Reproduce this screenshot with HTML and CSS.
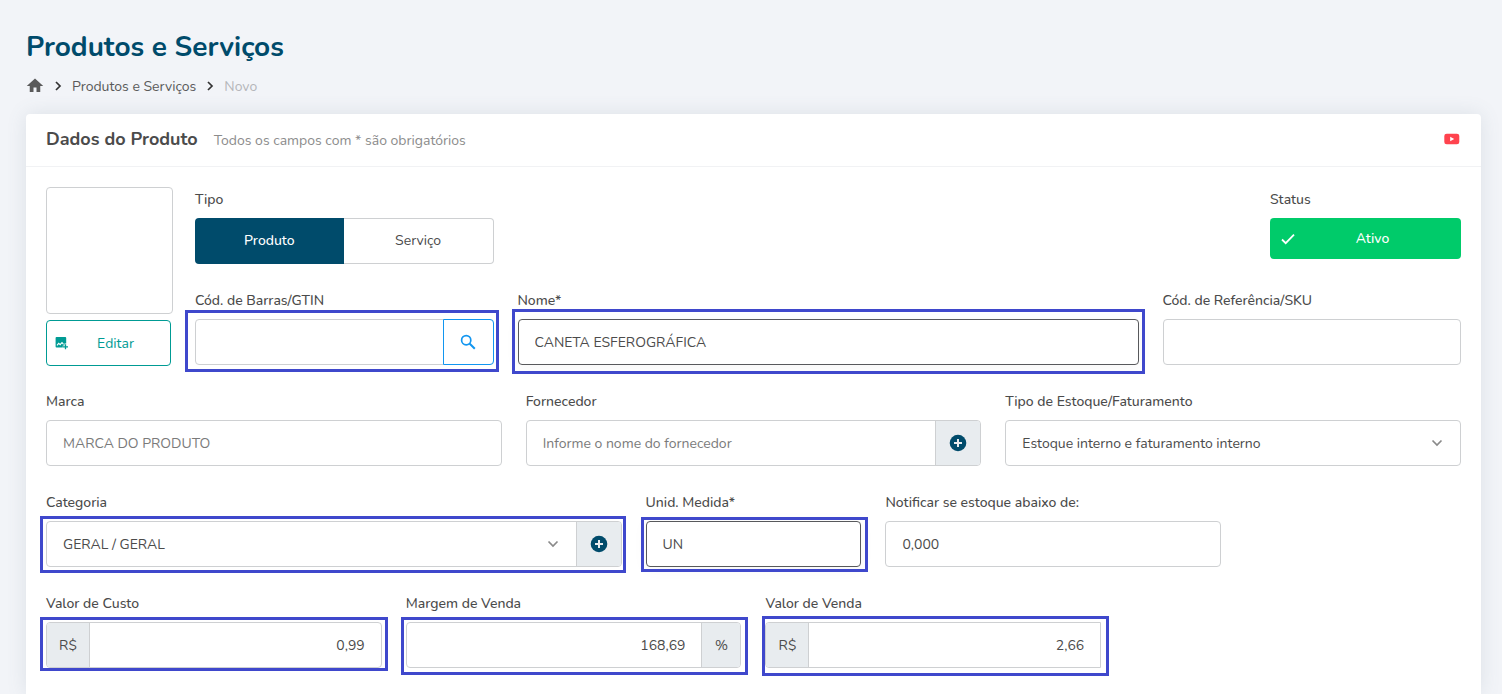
FILE: index.html
```html
<!DOCTYPE html>
<html lang="pt-BR">
<head>
<meta charset="utf-8">
<meta name="viewport" content="width=device-width, initial-scale=1">
<title>Produtos e Serviços</title>
<link rel="stylesheet" href="styles.css">
</head>
<body>
<main class="page">
  <h1 class="page-title">Produtos e Serviços</h1>
  <nav class="breadcrumb" aria-label="Navegação">
    <a class="crumb-home" href="#" aria-label="Início">
      <svg width="18" height="18" viewBox="0 0 24 24"><path fill="currentColor" d="M10 20v-6h4v6h5v-8h4L12 2 1 12h4v8z"/></svg>
    </a>
    <svg class="crumb-sep" width="8" height="10" viewBox="0 0 8 10"><path d="M2 1l4 4-4 4" fill="none" stroke="currentColor" stroke-width="1.7"/></svg>
    <a class="crumb" href="#">Produtos e Serviços</a>
    <svg class="crumb-sep" width="8" height="10" viewBox="0 0 8 10"><path d="M2 1l4 4-4 4" fill="none" stroke="currentColor" stroke-width="1.7"/></svg>
    <span class="crumb crumb-current">Novo</span>
  </nav>

  <section class="card">
    <header class="card-header">
      <h2 class="card-title">Dados do Produto</h2>
      <span class="card-note">Todos os campos com * são obrigatórios</span>
      <a class="video-link" href="#" aria-label="Vídeo">
        <svg width="18" height="12" viewBox="0 0 18 12"><rect x="1.3" y="0.7" width="15" height="10.600" rx="2.400" fill="#ff434e"/><path d="M7.200 3.800v4.400L11.200 6z" fill="#fff"/></svg>
      </a>
    </header>

    <form class="card-body">
      <div class="top">
        <div class="photo">
          <div class="photo-frame"></div>
          <button class="edit-button" type="button">
            <svg width="14" height="14" viewBox="0 0 14 14"><path fill="currentColor" d="M1.500 1h8.800q.9 0 .9.900V7.500H9.400V9.400H7.800v2H1.500q-.9 0-.9-.9V1.900q0-.9.9-.9z"/><path d="M2 9.300l1.700-2 1.500 1.300 1.800-2.100 1.500 1.800" fill="none" stroke="#fff" stroke-width="1.100"/><path d="M10.500 8.300v5M8 10.800h5" stroke="currentColor" stroke-width="1.300"/></svg>
            <span>Editar</span>
          </button>
        </div>

        <div class="grid">
          <div class="field span-3">
            <span class="label" id="tipo">Tipo</span>
            <div class="segmented" role="group" aria-labelledby="tipo">
              <button class="segment active" type="button">Produto</button>
              <button class="segment" type="button">Serviço</button>
            </div>
          </div>
          <div class="field span-2 at-end">
            <span class="label" id="status">Status</span>
            <button class="status-button" type="button" aria-describedby="status">
              <svg width="14" height="12" viewBox="0 0 14 12"><path d="M1 6.500l3.700 3.700L13 1.700" fill="none" stroke="currentColor" stroke-width="1.800"/></svg>
              <span>Ativo</span>
            </button>
          </div>

          <div class="field span-3 row-start">
            <label class="label" for="gtin">Cód. de Barras/GTIN</label>
            <div class="control mark mark-gtin">
              <input class="input" id="gtin" type="text">
              <button class="search-button" type="button" aria-label="Buscar">
                <svg width="16" height="16" viewBox="0 0 16 16" fill="none" stroke="currentColor"><circle cx="6.200" cy="6.200" r="4.600" stroke-width="1.700"/><path d="M9.500 9.500l5.300 5.300" stroke-width="2"/></svg>
              </button>
            </div>
          </div>
          <div class="field span-6">
            <label class="label" for="nome">Nome*</label>
            <div class="control focused mark mark-nome">
              <input class="input" id="nome" type="text" value="CANETA ESFEROGRÁFICA">
            </div>
          </div>
          <div class="field span-3">
            <label class="label" for="sku">Cód. de Referência/SKU</label>
            <div class="control"><input class="input" id="sku" type="text"></div>
          </div>
        </div>
      </div>

      <div class="grid">
        <div class="field span-4">
          <label class="label" for="marca">Marca</label>
          <div class="control"><input class="input" id="marca" type="text" placeholder="MARCA DO PRODUTO"></div>
        </div>
        <div class="field span-4">
          <label class="label" for="fornecedor">Fornecedor</label>
          <div class="control">
            <input class="input" id="fornecedor" type="text" placeholder="Informe o nome do fornecedor">
            <button class="addon add-button" type="button" aria-label="Adicionar fornecedor">
              <svg width="18" height="18" viewBox="0 0 18 18"><circle cx="9" cy="9" r="8.300" fill="#004b6b"/><path d="M9 5v8M5 9h8" stroke="#e9ecef" stroke-width="2"/></svg>
            </button>
          </div>
        </div>
        <div class="field span-4">
          <label class="label" for="estoque">Tipo de Estoque/Faturamento</label>
          <div class="control">
            <div class="select-box">
              <select class="input select" id="estoque"><option>Estoque interno e faturamento interno</option></select>
              <svg class="chevron" width="12" height="8" viewBox="0 0 12 8"><path d="M1.500 1.500L6 6l4.500-4.500" fill="none" stroke="currentColor" stroke-width="1.700"/></svg>
            </div>
          </div>
        </div>

        <div class="field span-5">
          <label class="label" for="categoria">Categoria</label>
          <div class="control mark mark-categoria">
            <div class="select-box">
              <select class="input select" id="categoria"><option>GERAL / GERAL</option></select>
              <svg class="chevron" width="12" height="8" viewBox="0 0 12 8"><path d="M1.500 1.500L6 6l4.500-4.500" fill="none" stroke="currentColor" stroke-width="1.700"/></svg>
            </div>
            <button class="addon add-button" type="button" aria-label="Adicionar categoria">
              <svg width="18" height="18" viewBox="0 0 18 18"><circle cx="9" cy="9" r="8.300" fill="#004b6b"/><path d="M9 5v8M5 9h8" stroke="#e9ecef" stroke-width="2"/></svg>
            </button>
          </div>
        </div>
        <div class="field span-2">
          <label class="label" for="unidade">Unid. Medida*</label>
          <div class="control focused mark mark-unidade"><input class="input" id="unidade" type="text" value="UN"></div>
        </div>
        <div class="field span-3">
          <label class="label" for="notificar">Notificar se estoque abaixo de:</label>
          <div class="control"><input class="input" id="notificar" type="text" value="0,000"></div>
        </div>

        <div class="field span-3 row-start">
          <label class="label" for="custo">Valor de Custo</label>
          <div class="control mark mark-custo">
            <span class="addon prefix">R$</span>
            <input class="input amount" id="custo" type="text" value="0,99">
          </div>
        </div>
        <div class="field span-3">
          <label class="label" for="margem">Margem de Venda</label>
          <div class="control mark mark-margem">
            <input class="input amount" id="margem" type="text" value="168,69">
            <span class="addon suffix">%</span>
          </div>
        </div>
        <div class="field span-3">
          <label class="label" for="venda">Valor de Venda</label>
          <div class="control square-end mark mark-venda">
            <span class="addon prefix">R$</span>
            <input class="input amount" id="venda" type="text" value="2,66">
          </div>
        </div>
      </div>
    </form>
  </section>
</main>
</body>
</html>
```
FILE: styles.css
```css
*,
*::before,
*::after {
  box-sizing: border-box;
}

body {
  margin: 0;
  background: #f2f4f8;
  color: #4b4b4b;
  font-family: Nunito, Lato, sans-serif;
  font-size: 14px;
  line-height: 24px;
}

button,
input,
select {
  margin: 0;
  font: inherit;
  color: inherit;
}

svg {
  display: block;
  flex: none;
}

a {
  color: inherit;
  text-decoration: none;
}

.page {
  display: flex;
  flex-direction: column;
  min-height: 100vh;
  padding: 28px 21px 0 26px;
}

.page-title {
  margin: 0;
  color: #004b6b;
  font-size: 28px;
  font-weight: 700;
  line-height: 38px;
}

.breadcrumb {
  display: flex;
  align-items: center;
  gap: 10px;
  height: 24px;
  margin: 8px 0 16px;
  color: #5a5a5a;
}

.crumb {
  padding-top: 2px;
}

.crumb-sep {
  color: #333;
}

.crumb-current {
  color: #b5b6ba;
}

.card {
  flex: 1;
  background: #fff;
  border-radius: 4px 4px 0 0;
  box-shadow: 0 0 20px rgba(90, 110, 130, 0.14);
}

.card-header {
  display: flex;
  align-items: center;
  gap: 16px;
  padding: 13px 20px 15px;
  border-bottom: 1px solid #f1f2f4;
}

.card-title {
  margin: 0;
  font-size: 18px;
  font-weight: 700;
  line-height: 24px;
}

.card-note {
  padding-top: 4px;
  color: #8c8c8c;
  line-height: 20px;
}

.video-link {
  margin-left: auto;
}

.card-body {
  display: flex;
  flex-direction: column;
  gap: 23px;
  padding: 20px;
}

.top {
  display: grid;
  grid-template-columns: 127px 1fr;
  gap: 22px;
}

.photo {
  display: flex;
  flex-direction: column;
  gap: 6px;
}

.photo-frame {
  height: 127px;
  border: 1px solid #ced0d2;
  border-radius: 4px;
}

.edit-button {
  display: flex;
  align-items: center;
  width: 125px;
  height: 46px;
  padding: 0 8px;
  border: 1px solid #009b94;
  border-radius: 4px;
  background: #fff;
  color: #009b94;
}

.edit-button span {
  flex: 1;
  padding-top: 2px;
}

.grid {
  display: grid;
  grid-template-columns: repeat(12, minmax(0, 1fr));
  gap: 24px;
  align-content: start;
}

.span-2 { grid-column: span 2; }
.span-3 { grid-column: span 3; }
.span-4 { grid-column: span 4; }
.span-5 { grid-column: span 5; }
.span-6 { grid-column: span 6; }
.at-end { grid-column: 11 / span 2; }
.row-start { grid-column: 1 / span 3; }

.field {
  display: flex;
  flex-direction: column;
  gap: 5px;
}

.label {
  font-weight: 500;
  line-height: 26px;
}

.segmented {
  display: flex;
  height: 46px;
}

.segment {
  flex: 1;
  border: 1px solid #ced0d2;
  border-left: 0;
  border-radius: 0 4px 4px 0;
  background: #fff;
}

.segment.active {
  border: 0;
  border-radius: 4px 0 0 4px;
  background: #004b6b;
  color: #fff;
  font-weight: 500;
}

.status-button {
  display: flex;
  align-items: center;
  height: 41px;
  padding: 0 11px;
  border: 0;
  border-radius: 4px;
  background: #00cb6a;
  color: #fff;
  font-weight: 500;
}

.status-button span {
  flex: 1;
}

.control {
  position: relative;
  display: flex;
  height: 46px;
  border: 1px solid #ced0d2;
  border-radius: 4px;
  background: #fff;
}

.focused {
  border-color: #58595c;
  box-shadow: 0 2px 16px rgba(0, 0, 0, 0.04);
}

.square-end {
  border-radius: 4px 0 0 4px;
}

.input {
  flex: 1;
  min-width: 0;
  width: 100%;
  padding: 2px 16px 0;
  border: 0;
  border-radius: 4px;
  outline: 0;
  background: transparent;
}

.input::placeholder {
  color: #7a7a7a;
  opacity: 1;
}

.amount {
  text-align: right;
}

.select-box {
  flex: 1;
  display: grid;
  align-items: center;
}

.select-box > * {
  grid-area: 1 / 1;
}

.select {
  height: 44px;
  appearance: none;
}

.chevron {
  justify-self: end;
  margin-right: 17px;
  color: #8a8a8a;
  pointer-events: none;
}

.search-button {
  display: grid;
  place-items: center;
  width: 51px;
  margin: -1px;
  border: 1px solid #1296f0;
  border-radius: 0 4px 4px 0;
  background: #fff;
  color: #1296f0;
}

.addon {
  display: grid;
  place-items: center;
  padding: 2px 0 0;
  border: 0;
  background: #e8ecef;
}

.add-button {
  width: 45px;
  padding: 0;
  border-left: 1px solid #ced0d2;
  border-radius: 0 3px 3px 0;
}

.prefix {
  width: 43px;
  border-right: 1px solid #ced0d2;
  border-radius: 3px 0 0 3px;
}

.suffix {
  width: 39px;
  border-left: 1px solid #ced0d2;
  border-radius: 0 3px 3px 0;
}

.mark::after {
  content: "";
  position: absolute;
  border: 3px solid #3f48cc;
  pointer-events: none;
}

.mark-gtin::after { inset: -10px -6px -8px -11px; }
.mark-nome::after { inset: -11px -7px -10px -7px; }
.mark-categoria::after { inset: -6px -5px -7px -7px; }
.mark-unidade::after { inset: -5px -8px -6px -6px; }
.mark-custo::after { inset: -6px -7px -4px -7px; }
.mark-margem::after { inset: -6px -8px -8px -6px; }
.mark-venda::after { inset: -7px -9px -9px -4px; }
```
